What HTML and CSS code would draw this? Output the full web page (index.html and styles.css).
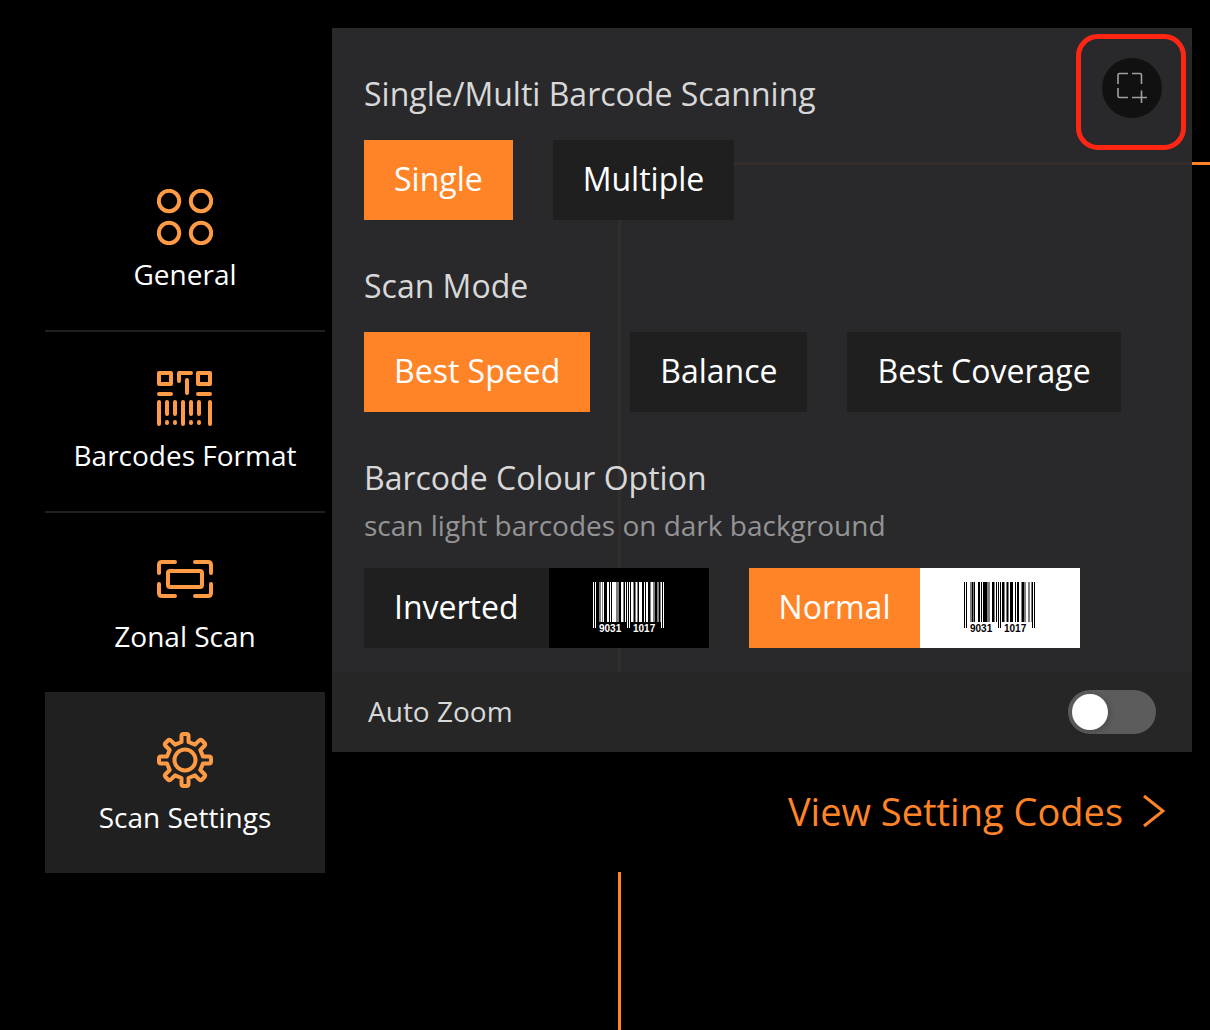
FILE: index.html
```html
<!DOCTYPE html>
<html lang="en">
<head>
<meta charset="utf-8">
<meta name="viewport" content="width=device-width, initial-scale=1">
<title>Scan Settings</title>
<link rel="stylesheet" href="styles.css">
</head>
<body>
<svg class="defs" width="0" height="0" aria-hidden="true">
  <symbol id="bars" viewBox="0 0 72 52">
    <g fill="currentColor">
      <path d="M0 0h1v46h-1zM2 0h1v46h-1zM34 0h1v46h-1zM36 0h1v46h-1zM68 0h1v46h-1zM70 0h1v46h-1z"/>
      <path d="M8 0h1v40h-1zM10 0h1v40h-1zM14 0h2v40h-2zM17 0h1v40h-1zM19 0h4v40h-4zM28 0h2v40h-2zM32 0h1v40h-1zM38 0h2v40h-2zM43 0h1v40h-1zM46 0h3v40h-3zM51 0h1v40h-1zM53 0h2v40h-2zM58 0h2v40h-2z"/>
      <path opacity=".5" d="M6 0h2v40h-2zM9 0h1v40h-1zM23 0h3v40h-3zM30 0h1v40h-1zM40 0h1v40h-1zM42 0h1v40h-1zM44 0h1v40h-1zM57 0h1v40h-1zM60 0h2v40h-2zM64 0h2v40h-2zM67 0h1v40h-1z"/>
    </g>
  </symbol>
</svg>
<div class="viewfinder" aria-hidden="true"></div>
<div class="layout">
  <nav class="sidebar" aria-label="Settings sections">
    <a class="nav-item" href="#general">
      <svg class="nav-icon" viewBox="0 0 56 56"><circle cx="12" cy="12" r="10.2"/><circle cx="44" cy="12" r="10.2"/><circle cx="12" cy="44" r="10.2"/><circle cx="44" cy="44" r="10.2"/></svg>
      <span>General</span>
    </a>
    <a class="nav-item" href="#formats">
      <svg class="nav-icon" viewBox="0 0 56 56"><path d="M2 3h12v11H2zM41 3h12v11H41zM22 11V3h12M30 10v13M2 24h12M41 24h12M2 32v22M10 32v12M18 32v12M26 32v22M34 32v12M42 32v12M53 32v22M10 52v1M18 52v1M34 52v1M42 52v1"/></svg>
      <span>Barcodes Format</span>
    </a>
    <a class="nav-item" href="#zonal">
      <svg class="nav-icon" viewBox="0 0 56 56"><path d="M2 22V14Q2 11 5 11H18M38 11H51Q54 11 54 14V22M54 33V42Q54 45 51 45H38M18 45H5Q2 45 2 42V33"/><rect x="11" y="20" width="34" height="16" rx="2"/></svg>
      <span>Zonal Scan</span>
    </a>
    <a class="nav-item nav-item-current" href="#scan" aria-current="page">
      <svg class="nav-icon nav-icon-gear" viewBox="0 0 56 56"><circle cx="28" cy="28" r="10.5"/><path d="M24.500 10V4Q24.500 2 26.500 2H29.500Q31.500 2 31.500 4V10L38 12.700L42 8.700Q43.500 7 45 8.500L47.500 11Q49 12.500 47.300 14L43.300 18L46 24.500H52Q54 24.500 54 26.500V29.500Q54 31.500 52 31.500H46L43.300 38L47.300 42Q49 43.500 47.500 45L45 47.500Q43.500 49 42 47.300L38 43.300L31.500 46V52Q31.500 54 29.500 54H26.500Q24.500 54 24.500 52V46L18 43.300L14 47.300Q12.500 49 11 47.500L8.500 45Q7 43.500 8.700 42L12.700 38L10 31.500H4Q2 31.500 2 29.500V26.500Q2 24.500 4 24.500H10L12.700 18L8.700 14Q7 12.500 8.500 11L11 8.500Q12.500 7 14 8.700L18 12.700Z"/></svg>
      <span>Scan Settings</span>
    </a>
  </nav>
  <main class="panel">
    <div class="options">
      <div class="highlight">
        <button class="add-zone" type="button" aria-label="Add scan area">
          <svg viewBox="0 0 32 32"><path d="M12 1.500H3.500Q2 1.500 2 3V12M16 1.500H24Q25.500 1.500 25.500 3V12M2 16V24Q2 25.500 3.500 25.500H12M16 25.500H31M25.500 18.500V31"/></svg>
        </button>
      </div>
      <section class="group">
        <h2 class="title">Single/Multi Barcode Scanning</h2>
        <div class="choices">
          <button class="choice selected" type="button" aria-pressed="true"><span class="choice-label">Single</span></button>
          <button class="choice" type="button" aria-pressed="false"><span class="choice-label">Multiple</span></button>
        </div>
      </section>
      <section class="group">
        <h2 class="title">Scan Mode</h2>
        <div class="choices">
          <button class="choice selected" type="button" aria-pressed="true"><span class="choice-label">Best Speed</span></button>
          <button class="choice" type="button" aria-pressed="false"><span class="choice-label">Balance</span></button>
          <button class="choice" type="button" aria-pressed="false"><span class="choice-label">Best Coverage</span></button>
        </div>
      </section>
      <section class="group">
        <h2 class="title title-described">Barcode Colour Option</h2>
        <p class="description">scan light barcodes on dark background</p>
        <div class="choices">
          <button class="choice" type="button" aria-pressed="false"><span class="choice-label">Inverted</span><span class="sample sample-inverted"><svg class="barcode" viewBox="0 0 72 52"><use href="#bars"/><text x="6" y="50">9031</text><text x="40" y="50">1017</text></svg></span></button>
          <button class="choice selected" type="button" aria-pressed="true"><span class="choice-label">Normal</span><span class="sample"><svg class="barcode" viewBox="0 0 72 52"><use href="#bars"/><text x="6" y="50">9031</text><text x="40" y="50">1017</text></svg></span></button>
        </div>
      </section>
    </div>
    <div class="toggle-row">
      <label class="toggle-label" for="auto-zoom">Auto Zoom</label>
      <input class="switch" id="auto-zoom" type="checkbox" role="switch">
    </div>
    <div class="footer">
      <a class="codes-link" href="#codes">View Setting Codes <svg class="chevron" viewBox="0 0 22 34"><path d="M1 2L20 17L1 32"/></svg></a>
    </div>
  </main>
</div>
</body>
</html>
```

FILE: styles.css
```css
* {
  box-sizing: border-box;
}

body {
  margin: 0;
  min-height: 100vh;
  position: relative;
  overflow-x: hidden;
  background: #000;
  color: #fff;
  font-family: "Open Sans", "Noto Sans", sans-serif;
  font-size: 28px;
}

.defs {
  position: absolute;
}

/* Camera frame showing through behind the panel */
.viewfinder {
  position: absolute;
  top: 162px;
  right: 0;
  bottom: 0;
  left: 618px;
  border-top: 3px solid #ff8427;
  border-left: 3px solid #ff8427;
}

.layout {
  position: relative;
  display: flex;
  align-items: flex-start;
  gap: 7px;
  padding: 28px 18px 0 45px;
}

.sidebar {
  flex: 0 0 280px;
  margin-top: 121px;
}

.nav-item {
  display: flex;
  flex-direction: column;
  align-items: center;
  gap: 10px;
  height: 181px;
  padding-top: 40px;
  box-shadow: 0 2px #1f1f1f;
  color: #fff;
  line-height: 38px;
  text-decoration: none;
}

.nav-item:nth-last-child(-n+2) {
  box-shadow: none;
}

.nav-item-current {
  background: #202020;
}

.nav-icon {
  width: 56px;
  height: 56px;
  fill: none;
  stroke: #ff9a45;
  stroke-width: 4;
  stroke-linecap: round;
  stroke-linejoin: round;
}

.panel {
  flex: 1;
  min-width: 0;
}

.options {
  position: relative;
  display: flex;
  flex-direction: column;
  gap: 44px;
  padding: 44px 32px 24px;
  background: rgba(43, 43, 45, 0.96);
}

.highlight {
  position: absolute;
  top: 6px;
  right: 6px;
  display: flex;
  justify-content: center;
  width: 110px;
  height: 116px;
  padding: 19px 0 0 2px;
  border: 5px solid #ff2613;
  border-radius: 22px;
}

.add-zone {
  display: grid;
  place-items: center;
  width: 60px;
  height: 60px;
  padding: 0;
  border: 0;
  border-radius: 50%;
  background: #111;
}

.add-zone svg {
  width: 32px;
  height: 32px;
  fill: none;
  stroke: #a0a0a0;
  stroke-width: 1.6;
}

.title {
  margin: 0 0 24px;
  color: #d8d8d8;
  font-size: 32px;
  font-weight: 400;
  line-height: 44px;
}

.title-described {
  margin-bottom: 4px;
}

.description {
  margin: 0 0 22px;
  color: #949495;
  line-height: 42px;
}

.choices {
  display: flex;
  flex-wrap: wrap;
  gap: 40px;
}

.choice {
  display: flex;
  height: 80px;
  padding: 0;
  border: 0;
  background: #1f1f1f;
  color: #fff;
  font: inherit;
  font-size: 32px;
  line-height: 78px;
}

.selected {
  background: #ff8427;
}

.choice-label {
  padding: 0 30px;
}

.sample {
  display: grid;
  place-items: center;
  width: 160px;
  height: 80px;
  background: #fff;
  color: #000;
}

.sample-inverted {
  background: #000;
  color: #fff;
}

.barcode {
  width: 72px;
  height: 52px;
  fill: currentColor;
  font-family: "Liberation Sans", sans-serif;
  font-size: 10px;
  font-weight: 700;
  line-height: 12px;
}

.toggle-row {
  display: flex;
  align-items: center;
  justify-content: space-between;
  height: 80px;
  padding: 0 36px;
  background: #262626;
  color: #d8d8d8;
}

.toggle-label {
  padding-bottom: 2px;
}

.switch {
  appearance: none;
  display: flex;
  align-items: center;
  width: 88px;
  height: 44px;
  margin: 0;
  padding: 4px;
  border-radius: 22px;
  background: #5c5c5c;
}

.switch::before {
  content: "";
  width: 36px;
  height: 36px;
  border-radius: 50%;
  background: #fff;
  box-shadow: 2px 2px 6px rgba(0, 0, 0, 0.2);
}

.switch:checked {
  justify-content: flex-end;
  background: #ff8427;
}

.footer {
  display: flex;
  align-items: center;
  justify-content: flex-end;
  height: 120px;
  padding: 0 27px 2px 0;
  background: #000;
}

.codes-link {
  display: flex;
  align-items: center;
  gap: 20px;
  color: #ff8427;
  font-size: 38px;
  text-decoration: none;
}

.chevron {
  width: 22px;
  height: 34px;
  fill: none;
  stroke: currentColor;
  stroke-width: 3;
}
```
